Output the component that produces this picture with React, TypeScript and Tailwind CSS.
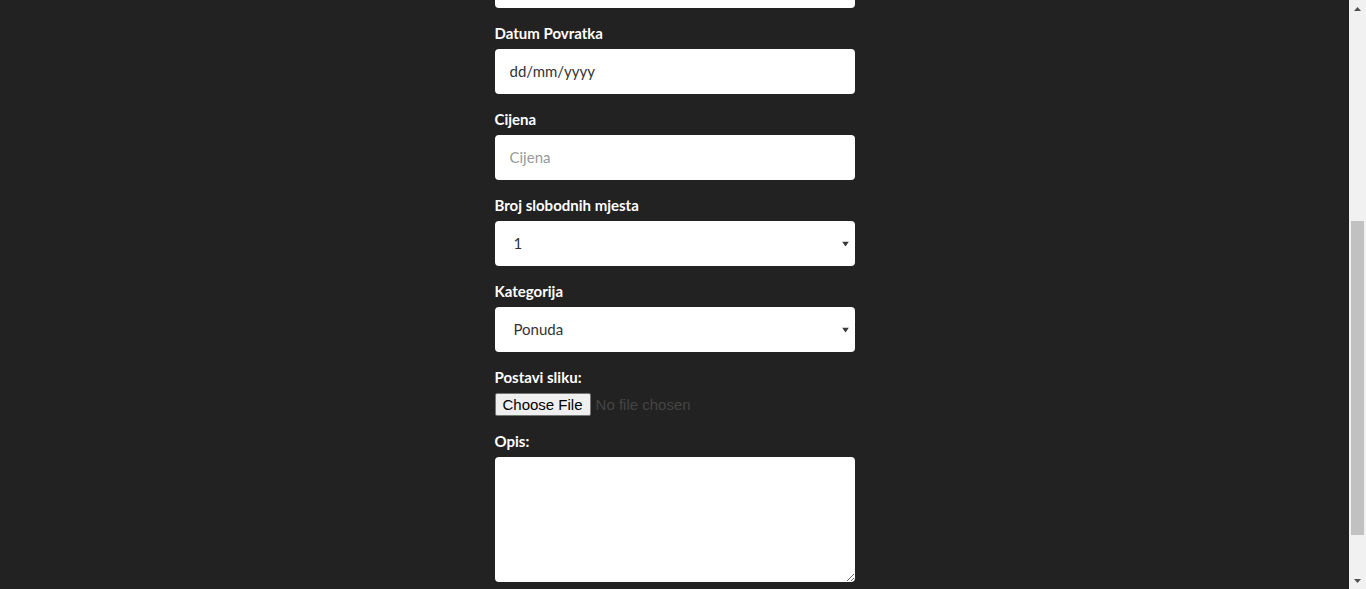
import { ReactNode } from 'react'

function Field({ label, children }: { label: string; children: ReactNode }) {
  return (
    <div className="mt-[15px] flex flex-col">
      <label className="mb-[6px] block text-[15px] font-bold leading-[20px] text-white">
        {label}
      </label>
      {children}
    </div>
  )
}

function Caret() {
  return (
    <svg
      className="pointer-events-none absolute right-[6px] top-1/2 -translate-y-1/2"
      width="7"
      height="5"
      viewBox="0 0 7 5"
    >
      <path d="M0 0h7L3.5 5z" fill="#3a3a3a" />
    </svg>
  )
}

const inputCls =
  'h-[45px] w-full rounded-[4px] bg-white px-[15px] text-[15px] text-[#333] outline-none'

export default function App() {
  return (
    <div className="flex h-[589px] overflow-hidden bg-[#222] font-['Lato','Open_Sans',sans-serif]">
      <main className="flex flex-1 justify-center">
        <form className="-mt-[37px] flex w-[360px] flex-col">
          <input className={inputCls} type="text" />

          <Field label="Datum Povratka">
            <input
              className={inputCls + ' pb-[1px] placeholder:text-[#333]'}
              type="text"
              placeholder="dd/mm/yyyy"
            />
          </Field>

          <Field label="Cijena">
            <input
              className={inputCls + ' pb-[1px] placeholder:text-[#999]'}
              type="text"
              placeholder="Cijena"
            />
          </Field>

          <Field label="Broj slobodnih mjesta">
            <div className="relative">
              <select className={inputCls + ' appearance-none pb-[1px] pl-[19px]'} defaultValue="1">
                <option>1</option>
                <option>2</option>
                <option>3</option>
              </select>
              <Caret />
            </div>
          </Field>

          <Field label="Kategorija">
            <div className="relative">
              <select className={inputCls + ' appearance-none pb-[1px] pl-[19px]'} defaultValue="Ponuda">
                <option>Ponuda</option>
                <option>Potražnja</option>
              </select>
              <Caret />
            </div>
          </Field>

          <Field label="Postavi sliku:">
            <input
              type="file"
              className="h-[23px] font-['Liberation_Sans',Arial,sans-serif] text-[15px] leading-[21px] text-[#444] file:mr-[5px] file:h-[23px] file:rounded-[2px] file:border file:border-solid file:border-[#767676] file:bg-[#efefef] file:px-[7px] file:text-black"
            />
          </Field>

          <Field label="Opis:">
            <textarea className="h-[125px] w-full rounded-[4px] bg-white px-[15px] py-[10px] text-[15px] text-[#333] outline-none" />
          </Field>
        </form>
      </main>

      <div className="flex w-[17px] flex-col bg-[#f1f1f1]">
        <div className="flex h-[17px] items-center justify-center">
          <svg width="7" height="4" viewBox="0 0 7 4">
            <path d="M3.5 0L7 4H0z" fill="#505050" />
          </svg>
        </div>
        <div className="h-[204px]" />
        <div className="mx-[2px] h-[314px] bg-[#c1c1c1]" />
        <div className="flex-1" />
        <div className="flex h-[17px] items-center justify-center">
          <svg width="7" height="4" viewBox="0 0 7 4">
            <path d="M0 0h7L3.5 4z" fill="#505050" />
          </svg>
        </div>
      </div>
    </div>
  )
}
